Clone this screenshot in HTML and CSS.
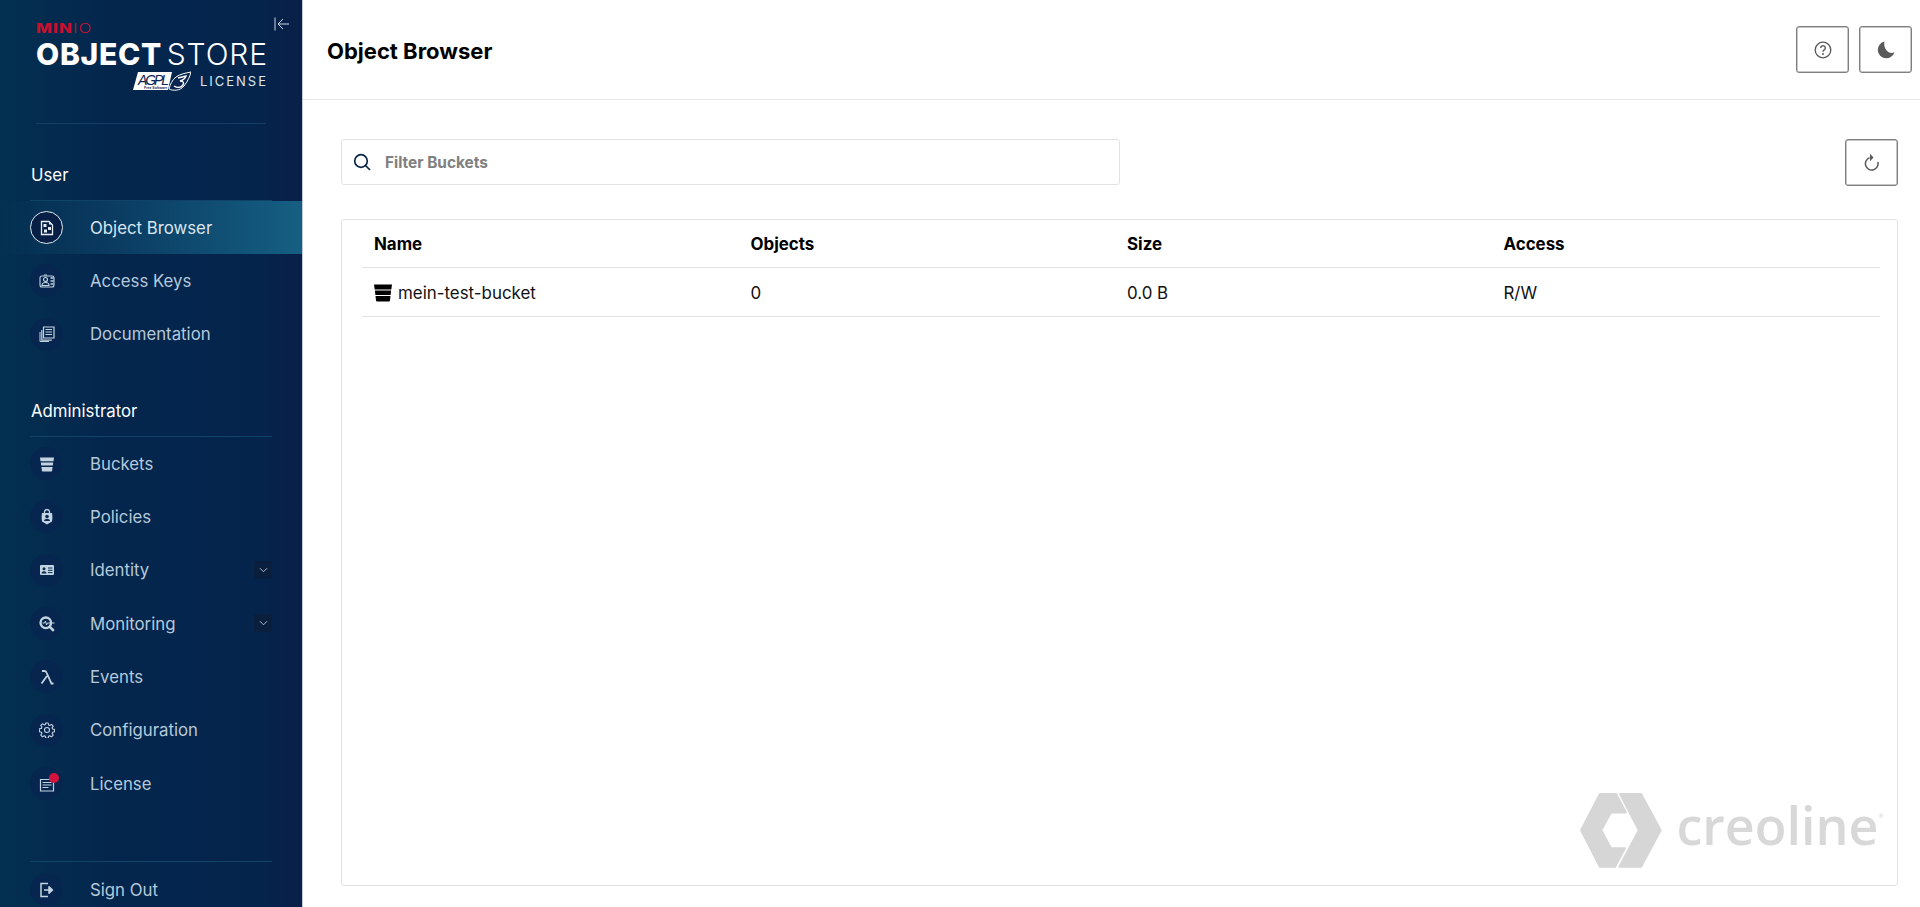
FILE: index.html
```html
<!DOCTYPE html>
<html lang="en">
<head>
<meta charset="utf-8">
<title>MinIO Object Store</title>
<link rel="stylesheet" href="styles.css">
</head>
<body>
<div class="app">
  <aside class="sidebar">
    <div class="brand">
      <div class="collapse">
        <svg viewBox="0 0 16 14" width="16" height="14"><path d="M1 0.500v13M15 7H4M9 2L4 7l5 5" fill="none" stroke="currentColor" stroke-width="1"/></svg>
      </div>
      <div class="logo">
        <div class="logo-minio"><b>MIN</b><span>IO</span></div>
        <div class="logo-title"><b>OBJECT</b><span>STORE</span></div>
        <div class="logo-license">
          <svg class="agpl" viewBox="0 0 58 20" width="58" height="20">
            <path d="M5 1h34l-4 18H0z" fill="#fff"/>
            <text x="5" y="13.500" class="agpl-word" textLength="31">AGPL</text>
            <text x="11" y="18" class="agpl-small">Free Software</text>
            <path d="M36 18C40 20 47 20 51 15 55 10 57 5 58 1 53 2 47 3 43 6 39 9 37 14 36 18z" fill="#0a2550" stroke="#fff" stroke-width="1"/>
            <path d="M45 7L53 5C52 8 50 9 47 10 51 10 51 12 50 14 48 17 44 17 41 15" stroke="#fff" fill="none" stroke-width="1.400"/>
          </svg>
          <span class="license-word">LICENSE</span>
        </div>
      </div>
    </div>
    <div class="brand-rule"></div>

    <div class="group-label first">User</div>
    <nav class="menu">
      <a class="item active"><span class="ico"><svg viewBox="0 0 16 16"><path d="M2.500 1.500h7.500l3.500 3.500v9.500h-11z" fill="none" stroke="currentColor" stroke-width="1.300"/><rect x="4.500" y="4" width="3" height="3" fill="currentColor"/><rect x="9" y="7" width="3" height="3" fill="currentColor"/><rect x="5" y="9.500" width="3" height="3" fill="currentColor"/><rect x="10" y="2.500" width="2" height="2" fill="currentColor"/></svg></span><span>Object Browser</span></a>
      <a class="item"><span class="ico"><svg viewBox="0 0 16 16"><rect x="1" y="3" width="14" height="11" rx="2" fill="none" stroke="currentColor" stroke-width="1.100"/><circle cx="6.500" cy="6.500" r="2" fill="none" stroke="currentColor" stroke-width="1.200"/><path d="M3 12.500c0-2 1.500-3 3.500-3s3.500 1 3.500 3z" fill="none" stroke="currentColor" stroke-width="1.200"/><path d="M11.500 5h3M11.500 8h3M11.500 11h3" stroke="currentColor" stroke-width="1.600"/><path d="M5 2h3" stroke="currentColor" stroke-width="1"/></svg></span><span>Access Keys</span></a>
      <a class="item"><span class="ico"><svg viewBox="0 0 16 16"><path d="M4.500 1h10.500v11H4.500z" fill="none" stroke="currentColor" stroke-width="1.200"/><path d="M6.500 3.500h6.500M6.500 6h6.500M6.500 8.500h6.500" stroke="currentColor" stroke-width="1.200"/><path d="M2.800 4v10.200h10" fill="none" stroke="currentColor" stroke-width="1.200"/><path d="M1 6v9.500h9" fill="none" stroke="currentColor" stroke-width="1"/></svg></span><span>Documentation</span></a>
    </nav>

    <div class="group-label second">Administrator</div>
    <nav class="menu">
      <a class="item"><span class="ico"><svg viewBox="0 0 16 16"><path d="M1 1.500h14l-.5 3.700H1.500z" fill="currentColor"/><path d="M1.800 6.500h12.400l-.4 3H2.200z" fill="currentColor"/><path d="M2.400 11h11.200l-.5 3.800c-.1.500-.3.700-.8.700H3.700c-.5 0-.7-.2-.8-.7z" fill="currentColor"/></svg></span><span>Buckets</span></a>
      <a class="item"><span class="ico"><svg viewBox="0 0 16 16"><path d="M5.500 4V3a2.500 2.500 0 015 0v1" fill="none" stroke="currentColor" stroke-width="1.300"/><path d="M3 4h10c.5 3 .5 6 0 8.500L8 15.500 3 12.500C2.500 10 2.500 7 3 4z" fill="currentColor"/><circle cx="8" cy="7.500" r="1.800" fill="#0a2a52"/><path d="M5 12c.3-1.500 1.500-2.200 3-2.200s2.700.7 3 2.200z" fill="#0a2a52"/></svg></span><span>Policies</span></a>
      <a class="item has-chevron"><span class="ico"><svg viewBox="0 0 16 16"><rect x="1" y="3" width="14" height="10" rx="1" fill="currentColor"/><circle cx="5" cy="6.800" r="1.500" fill="#0a2a52"/><path d="M2.500 11.500c.2-1.500 1.200-2.200 2.500-2.200s2.300.7 2.500 2.200z" fill="#0a2a52"/><path d="M9 6h4.500M9 8.300h4.500M9 10.600h4.500" stroke="#0a2a52" stroke-width="1"/></svg></span><span>Identity</span><span class="chev"><svg viewBox="0 0 10 6" width="9" height="6"><path d="M1 1l4 4 4-4" fill="none" stroke="currentColor" stroke-width="1"/></svg></span></a>
      <a class="item has-chevron"><span class="ico"><svg viewBox="0 0 16 16"><circle cx="6.800" cy="6.800" r="5.300" fill="none" stroke="currentColor" stroke-width="2.300"/><path d="M10 10l4.800 4.800" stroke="currentColor" stroke-width="2.500"/><path d="M3.500 7h2l1-2 1 4 1-2h7" fill="none" stroke="currentColor" stroke-width="1"/></svg></span><span>Monitoring</span><span class="chev"><svg viewBox="0 0 10 6" width="9" height="6"><path d="M1 1l4 4 4-4" fill="none" stroke="currentColor" stroke-width="1"/></svg></span></a>
      <a class="item"><span class="ico"><svg viewBox="0 0 16 16"><path d="M3 2h2.500c1 0 1.600.5 2 1.500L12.500 14.500H14.500M8 7L2.500 14.500" fill="none" stroke="currentColor" stroke-width="1.800"/></svg></span><span>Events</span></a>
      <a class="item"><span class="ico"><svg viewBox="0 0 16 16"><circle cx="8" cy="8" r="2.500" fill="none" stroke="currentColor" stroke-width="1.100"/><path d="M6.800 1h2.400l.4 2 1.100.5 1.800-1.100 1.700 1.700-1.100 1.800.5 1.100 2 .4v2.400l-2 .4-.5 1.100 1.100 1.800-1.700 1.700-1.800-1.100-1.100.5-.4 2H6.800l-.4-2-1.100-.5-1.800 1.100-1.700-1.700 1.100-1.800-.5-1.100-2-.4V6.800l2-.4.5-1.100-1.100-1.800 1.700-1.700 1.800 1.100 1.100-.5z" fill="none" stroke="currentColor" stroke-width="1.100" stroke-linejoin="round"/></svg></span><span>Configuration</span></a>
      <a class="item"><span class="ico"><svg viewBox="0 0 16 16"><path d="M1.500 3.500h13v11.500h-13z" fill="none" stroke="currentColor" stroke-width="1.200"/><path d="M3.500 6.500h9M3.500 9h9M3.500 11.500h6" stroke="currentColor" stroke-width="1.200"/></svg><span class="dot"></span></span><span>License</span></a>
    </nav>

    <div class="footer-rule"></div>
    <a class="item signout"><span class="ico"><svg viewBox="0 0 16 16"><path d="M9 1.500H2v13h7" fill="none" stroke="currentColor" stroke-width="1.500"/><path d="M5 8h7.500M10 4.800L13.500 8 10 11.200z" fill="currentColor" stroke="currentColor" stroke-width="1.500" stroke-linejoin="round"/></svg></span><span>Sign Out</span></a>
  </aside>

  <main class="main">
    <header class="topbar">
      <h1 class="title">Object Browser</h1>
      <div class="top-actions">
        <button class="icon-btn" aria-label="Help"><svg viewBox="0 0 18 18" width="18" height="18"><circle cx="9" cy="9" r="7.800" fill="none" stroke="currentColor" stroke-width="1.300"/><path d="M6.700 7a2.300 2.300 0 114 1.500c-.8.800-1.700 1-1.700 2.200" fill="none" stroke="currentColor" stroke-width="1.400"/><circle cx="9" cy="13" r="1" fill="currentColor"/></svg></button>
        <button class="icon-btn" aria-label="Theme"><svg viewBox="0 0 18 18" width="18" height="18"><path d="M7.500 0.500a8.500 8.500 0 1010 10.500c-1.500 1-3.500 1.200-5.300.4C8.500 9.800 6.500 5 7.500.5z" fill="currentColor"/></svg></button>
      </div>
    </header>
    <section class="content">
      <div class="toolbar">
        <label class="search">
          <svg viewBox="0 0 18 18" width="18" height="18"><circle cx="8" cy="8" r="6.300" fill="none" stroke="#0b2548" stroke-width="1.700"/><path d="M12.500 12.500L17 17" stroke="#0b2548" stroke-width="1.700"/></svg>
          <span class="placeholder">Filter Buckets</span>
        </label>
        <button class="icon-btn" aria-label="Refresh"><svg viewBox="0 0 18 18" width="18" height="18"><path d="M6.500 4.800A6.300 6.300 0 1014.800 9" fill="none" stroke="currentColor" stroke-width="1.500"/><path d="M7 0.800v7.500L10.500 4.600z" fill="currentColor"/></svg></button>
      </div>
      <div class="card">
        <div class="row head"><div>Name</div><div>Objects</div><div>Size</div><div>Access</div></div>
        <div class="row body-row">
          <div class="name-cell"><svg viewBox="0 0 18 18" width="18" height="18"><path d="M0 0.500h18l-.7 5H.7z" fill="#000"/><path d="M.9 6.500h16.200l-.5 4.500H1.400z" fill="#000"/><path d="M1.500 12h15l-.5 4.500c-.1.700-.5 1-1.100 1H3.100c-.6 0-1-.3-1.100-1z" fill="#000"/></svg><span>mein-test-bucket</span></div>
          <div>0</div><div>0.0 B</div><div>R/W</div>
        </div>
        <div class="watermark">
          <svg viewBox="-1 -1 84 77" width="82" height="75"><g fill="#d6d6d6" stroke="#d6d6d6" stroke-width="2" stroke-linejoin="round"><path d="M19.300 0H36l10 19H30.700L20.700 37.300 30.700 55.700H45L35 74.700H19.300L0 37.300z"/><path d="M40 0H61.700L81.700 37.300 61.700 74.700H39.300L59.300 37.300z"/></g></svg>
          <span class="wm-text">creoline</span><span class="wm-reg">®</span>
        </div>
      </div>
    </section>
  </main>
</div>
</body>
</html>
```
FILE: styles.css
```css
* { box-sizing: border-box; }
html, body { margin: 0; height: 100%; overflow: hidden; }
body { font-family: Inter, "Liberation Sans", sans-serif; background: #fff; color: #000; }

.app { display: flex; height: 907px; }

/* sidebar */
.sidebar {
  width: 303px; flex: none; height: 907px; overflow: hidden;
  display: flex; flex-direction: column;
  background: linear-gradient(90deg, #033050 0%, #04264d 35%, #04244c 85%, #0a1f48 100%);
  color: #b6c9da;
  border-right: 1px solid #c3ccd6;
}
.brand { height: 123px; position: relative; flex: none; }
.collapse { position: absolute; left: 274px; top: 17px; color: #c9d6e2; line-height: 0; }
.logo { padding: 23px 0 0 36px; width: 266px; display: flex; flex-direction: column; align-items: stretch; }
.logo-minio { color: #c8102e; font-size: 12.500px; line-height: 12px; letter-spacing: .8px; transform: scaleX(1.35); transform-origin: left; }
.logo-minio b { font-weight: 800; }
.logo-minio span { font-weight: 300; }
.logo-title { color: #fff; font-size: 30px; line-height: 32px; white-space: nowrap; margin-top: 3px; display: flex; justify-content: space-between; }
.logo-title b { font-weight: 800; letter-spacing: .7px; }
.logo-title span { font-weight: 300; letter-spacing: .9px; margin-right: -2px; }
.logo-license { display: flex; justify-content: flex-end; align-items: center; gap: 8.500px; margin-top: 1px; height: 20px; }
.agpl { flex: none; }
.agpl-word { font-family: "Liberation Sans", sans-serif; font-style: italic; font-size: 14px; fill: #0a2550; }
.agpl-small { font-family: "Liberation Sans", sans-serif; font-size: 3.500px; font-weight: 700; fill: #0a2550; }
.license-word { color: #dde6ee; font-size: 13px; letter-spacing: 2px; margin-right: -2px; }
.brand-rule { height: 1px; margin: 0 36px; background: #123f66; flex: none; }

.group-label { margin: 0 30px; padding-left: 1px; color: #fff; font-size: 16.800px; line-height: 20px; padding-bottom: 15px; border-bottom: 1px solid #0f4468; flex: none; }
.group-label.first { margin-top: 41px; }
.group-label.second { margin-top: 40px; }

.menu { display: flex; flex-direction: column; flex: none; }
.item { display: flex; align-items: center; height: 53.330px; flex: none; padding-left: 30px; font-size: 16.800px; color: #b6c9da; position: relative; }
.item.signout { margin-top: 1px; }
.item.active { color: #d9e5ef; background: linear-gradient(90deg, rgba(20,97,138,0) 0%, #155f83 100%); }
.ico { width: 33px; height: 33px; border-radius: 50%; background: #06264f; color: #c4d3e0; margin-right: 27px; flex: none; display: flex; align-items: center; justify-content: center; position: relative; }
.ico svg { width: 16px; height: 16px; }
.item.active .ico { background: #081f45; border: 1.500px solid #dfe8ef; color: #e6eef4; }
.chev { position: absolute; left: 254px; top: 17.500px; width: 18px; height: 18px; background: #0a1e3e; border-radius: 2px; display: flex; align-items: center; justify-content: center; }
.dot { position: absolute; right: 4px; top: 6px; width: 10px; height: 10px; border-radius: 50%; background: #d4143c; }
.footer-rule { margin: 51px 30px 0; height: 1px; background: #124468; flex: none; }

/* main */
.main { flex: 1; min-width: 0; display: flex; flex-direction: column; }
.topbar { height: 100px; flex: none; display: flex; align-items: center; justify-content: space-between; padding: 0 8px 0 24px; border-bottom: 1px solid #e8e8e8; }
.title { margin: 0; font-size: 22px; font-weight: 700; color: #000; position: relative; top: 1px; }
.top-actions { display: flex; gap: 10px; }
.icon-btn { width: 53px; height: 47px; padding: 0; background: #fff; border: 1.500px solid #7f7f7f; border-radius: 3px; color: #5a5a5a; display: flex; align-items: center; justify-content: center; box-shadow: 0 0 0 .5px #8f8f8f inset; }

.content { flex: 1; display: flex; flex-direction: column; padding: 38px 22px 21px 38px; min-height: 0; }
.toolbar { display: flex; justify-content: space-between; align-items: center; height: 48px; flex: none; }
.search { width: 779px; height: 46px; border: 1px solid #e2e2e2; border-radius: 3px; display: flex; align-items: center; padding-left: 11px; gap: 14px; }
.placeholder { color: #808080; font-size: 15.400px; font-weight: 700; }

.card { margin-top: 33px; flex: 1; border: 1px solid #e2e2e2; border-radius: 3px; padding: 0 17px 17px 20px; display: flex; flex-direction: column; min-height: 0; }
.row { display: grid; grid-template-columns: repeat(4, 1fr); align-items: center; border-bottom: 1px solid #e2e2e2; padding: 1px 0 0 12px; font-size: 16.900px; }
.row.head { height: 48px; font-weight: 700; }
.row.body-row { height: 49px; color: #111; }
.name-cell { display: flex; align-items: center; gap: 6px; }
.watermark { margin: auto -3.500px 0 0; align-self: flex-end; display: flex; align-items: flex-start; height: 75px; }
.wm-text { font-family: "Open Sans", sans-serif; font-weight: 600; font-size: 52px; line-height: 60px; color: #d8d8d8; margin: 2px 0 0 14.500px; }
.wm-reg { font-family: "Open Sans", sans-serif; font-size: 6px; color: #d8d8d8; margin-top: 19px; }
```
